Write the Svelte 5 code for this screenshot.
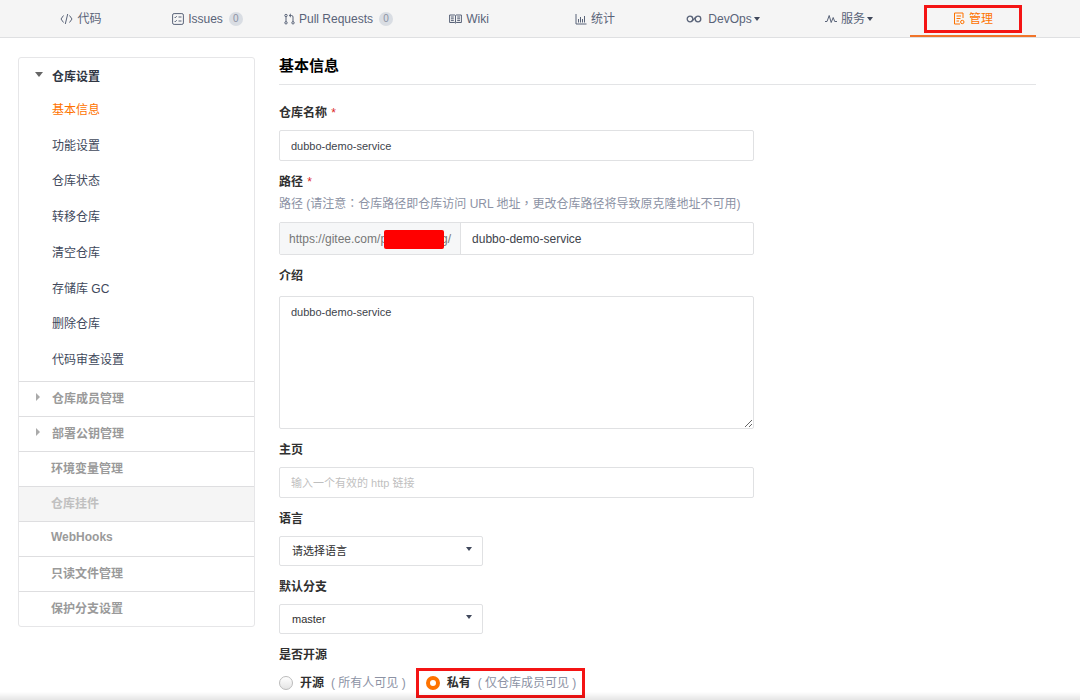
<script>
  const tabs = [
    { id: 'code', label: '代码' },
    { id: 'issues', label: 'Issues', count: 0 },
    { id: 'pulls', label: 'Pull Requests', count: 0 },
    { id: 'wiki', label: 'Wiki' },
    { id: 'stats', label: '统计' },
    { id: 'devops', label: 'DevOps', dropdown: true },
    { id: 'services', label: '服务', dropdown: true },
    { id: 'manage', label: '管理' }
  ];

  const settings = ['基本信息', '功能设置', '仓库状态', '转移仓库', '清空仓库', '存储库 GC', '删除仓库', '代码审查设置'];

  const sections = [
    { label: '仓库成员管理', fold: true },
    { label: '部署公钥管理', fold: true },
    { label: '环境变量管理' },
    { label: '仓库挂件', disabled: true },
    { label: 'WebHooks' },
    { label: '只读文件管理' },
    { label: '保护分支设置' }
  ];

  let activeTab = $state('manage');
  let activeSetting = $state('基本信息');
  let name = $state('dubbo-demo-service');
  let path = $state('dubbo-demo-service');
  let intro = $state('dubbo-demo-service');
  let homepage = $state('');
  let language = $state('');
  let branch = $state('master');
  let visibility = $state('private');
</script>

{#snippet icon(id)}
  {#if id === 'code'}
    <svg class="icon" width="13" height="12" viewBox="0 0 13 12"><path d="M3.5 2.5 1 6l2.5 3.5M9.5 2.5 12 6 9.500 9.500M7.700 1 5.300 11" /></svg>
  {:else if id === 'issues'}
    <svg class="icon" width="12" height="12" viewBox="0 0 12 12"><rect x=".6" y=".6" width="10.800" height="10.800" rx="1.500" /><path d="m2.500 4 .8.8 1.400-1.600M6.500 4h3M2.500 8l.8.8 1.400-1.600M6.500 8h3" /></svg>
  {:else if id === 'pulls'}
    <svg class="icon" width="11" height="12" viewBox="0 0 11 12"><circle cx="2" cy="2.500" r="1.200" /><circle cx="2" cy="9.800" r="1.200" /><circle cx="9" cy="9.800" r="1.200" /><path d="M2 3.700v4.900M9 8.600V4Q9 2.500 7.500 2.500H5.500M7 .8 5.200 2.500 7 4.200" /></svg>
  {:else if id === 'wiki'}
    <svg class="icon" width="13" height="10" viewBox="0 0 13 10"><path d="M.6 1h5.200l.7.600.7-.600h5.200v7.500H7.200l-.7.600-.7-.600H.6zM6.500 1.600v7M2 3h2.800M2 4.800h2.800M2 6.600h2.800M8.200 3H11M8.200 4.800H11M8.200 6.600H11" /></svg>
  {:else if id === 'stats'}
    <svg class="icon" width="12" height="12" viewBox="0 0 12 12"><path d="M1 1v10h10.500M3.500 9.500V6M5.500 9.500V4M7.500 9.500V6M9.500 9.500V3" /></svg>
  {:else if id === 'devops'}
    <svg class="icon bold wide" width="16" height="10" viewBox="0 0 16 10"><circle cx="4" cy="5" r="2.800" /><circle cx="12" cy="5" r="2.800" /><path d="M6 7 10 3" /></svg>
  {:else if id === 'services'}
    <svg class="icon" width="12" height="12" viewBox="0 0 12 12"><path d="M0 8.500h2L4.200 2.500 6.200 9.500 8.200 4.500l1.500 4H12" /></svg>
  {:else}
    <svg class="icon" width="12" height="13" viewBox="0 0 12 13"><path d="M10 6V1H1.500v11H7M3.500 4h4.500M3.500 6.500h4M3.500 9H6" /><circle cx="9.300" cy="10" r="1.700" /></svg>
  {/if}
{/snippet}

<nav class="tabs">
  {#each tabs as tab}
    <a href="#{tab.id}" class="tab" class:active={activeTab === tab.id} onclick={() => (activeTab = tab.id)}>
      <span class="tab-label" class:marked={tab.id === 'manage'}>
        {@render icon(tab.id)}
        {tab.label}
        {#if tab.count !== undefined}<span class="count">{tab.count}</span>{/if}
        {#if tab.dropdown}<span class="caret"></span>{/if}
      </span>
    </a>
  {/each}
</nav>

<div class="page">
  <aside class="sidebar">
    <button class="side-head"><span class="arrow down"></span>仓库设置</button>
    <div class="side-list">
      {#each settings as item}
        <a href="#{item}" class:current={activeSetting === item} onclick={() => (activeSetting = item)}>{item}</a>
      {/each}
    </div>
    {#each sections as s}
      <button class="side-section" class:fold={s.fold} disabled={s.disabled}>
        {#if s.fold}<span class="arrow right"></span>{/if}{s.label}
      </button>
    {/each}
  </aside>

  <main>
    <h1>基本信息</h1>
    <form>
      <div class="field">
        <label for="name">仓库名称 <span class="req">*</span></label>
        <input id="name" class="control" type="text" bind:value={name} />
      </div>

      <div class="field">
        <label class="tight" for="path">路径 <span class="req">*</span></label>
        <p class="help">路径 (请注意<span class="punct">：</span>仓库路径即仓库访问 URL 地址<span class="punct">，</span>更改仓库路径将导致原克隆地址不可用)</p>
        <div class="group">
          <span class="addon">https://gitee.com/p<span class="redacted"></span>g/</span>
          <input id="path" type="text" bind:value={path} />
        </div>
      </div>

      <div class="field">
        <label class="loose" for="intro">介绍</label>
        <textarea id="intro" class="control" bind:value={intro}></textarea>
      </div>

      <div class="field">
        <label for="homepage">主页</label>
        <input id="homepage" class="control" type="text" placeholder="输入一个有效的 http 链接" bind:value={homepage} />
      </div>

      <div class="field">
        <label for="language">语言</label>
        <div class="select">
          <select id="language" bind:value={language}>
            <option value="">请选择语言</option>
            <option value="java">Java</option>
          </select>
          <span class="caret"></span>
        </div>
      </div>

      <div class="field">
        <label for="branch">默认分支</label>
        <div class="select">
          <select id="branch" bind:value={branch}>
            <option value="master">master</option>
          </select>
          <span class="caret"></span>
        </div>
      </div>

      <fieldset>
        <legend>是否开源</legend>
        <div class="radios">
          <label class="radio">
            <input type="radio" name="visibility" value="public" bind:group={visibility} />
            <b>开源</b><span>( 所有人可见 )</span>
          </label>
          <label class="radio marked">
            <input type="radio" name="visibility" value="private" bind:group={visibility} />
            <b>私有</b><span>( 仅仓库成员可见 )</span>
          </label>
        </div>
      </fieldset>
    </form>
  </main>
</div>
<div class="bottom-shade"></div>

<style>
  :global(body) {
    background: #fff;
    color: #40485b;
    font-family: "Liberation Sans", "Noto Sans CJK SC", sans-serif;
    font-size: 12px;
    line-height: 20px;
    overflow: hidden;
  }
  a { color: inherit; text-decoration: none; }
  button, input, select, textarea { font-family: inherit; box-sizing: border-box; margin: 0; }

  .tabs {
    display: grid;
    grid-template-columns: 126fr 127fr 135fr 126fr 126fr 130fr 122fr 126fr;
    padding: 0 44px 0 18px;
    background: #f5f5f5;
    border-bottom: 1px solid #dfe0e2;
  }
  .tab {
    display: flex; justify-content: center; align-items: center;
    height: 37px; box-sizing: border-box;
    padding-top: 2px;
    border-bottom: 2px solid transparent;
    color: #596378;
  }
  .tab.active { color: #fe7300; border-bottom-color: #f0742a; }
  .tab-label { display: flex; align-items: center; gap: 4px; white-space: nowrap; }
  .icon { fill: none; stroke: currentColor; stroke-width: 1; }
  .icon.bold { stroke-width: 1.3; }
  .icon.wide { margin-right: 2px; }
  .count {
    margin-left: 2px; width: 14px; height: 14px; border-radius: 7px;
    background: #d9dde3; color: #8c92a4; font-size: 10px; line-height: 14px; text-align: center;
  }
  .caret {
    border: 3px solid transparent; border-top: 4px solid #40485b; border-bottom: 0;
  }
  .tab .caret { margin-left: -2px; }
  .marked { border: 3px solid #f41414; }
  .tab-label.marked { padding: 1px 26px; }

  .page { display: flex; align-items: flex-start; gap: 24px; padding: 19px 44px 0 18px; }
  .sidebar {
    flex: 0 0 237px; box-sizing: border-box;
    border: 1px solid #e6e6e8; border-radius: 3px;
  }
  .side-head, .side-section {
    position: relative; display: block; width: 100%;
    border: 0; background: none; text-align: left;
    font-size: 12px; font-weight: bold;
  }
  .side-head { height: 34px; padding: 0 0 0 33px; color: #303643; }
  .side-list { display: grid; grid-auto-rows: 1fr; height: 286px; padding-bottom: 3px; }
  .side-list a { display: flex; align-items: center; padding-left: 33px; }
  .side-list a.current { color: #fe7300; }
  .side-section {
    height: 35px; padding: 0 0 4px 32px;
    border-top: 1px solid #dedee0; color: #9a9a9a;
  }
  .side-section.fold { padding-left: 33px; }
  .side-section:disabled { background: #f5f5f5; color: #c0c0c0; }
  .arrow { position: absolute; left: 16px; top: 14px; }
  .arrow.down { border: 4px solid transparent; border-top: 5px solid #666; border-bottom: 0; }
  .arrow.right { left: 17px; top: 11px; border: 4px solid transparent; border-left: 4px solid #aaa; border-right: 0; }

  main { flex: 1; min-width: 0; }
  h1 {
    margin: 0 0 18px; padding-bottom: 9px; border-bottom: 1px solid #e3e4e6;
    color: #000; font-size: 15px; line-height: 18px;
  }
  form { max-width: 475px; }
  .field { margin-bottom: 11px; }
  .field > label, legend {
    display: block; margin-bottom: 7px; padding: 0;
    color: #303030; font-weight: bold;
  }
  .field > .tight { margin-bottom: 2px; }
  .field > .loose { margin-bottom: 10px; }
  .req { margin-left: 1px; color: #db2828; font-weight: normal; }
  .help { margin: 0 0 8px; color: #8c92a4; white-space: nowrap; }
  .punct { font-family: "Noto Sans CJK TC", sans-serif; line-height: 1; }
  .control {
    display: block; width: 100%; height: 31px; padding: 0 11px;
    border: 1px solid #e0e1e3; border-radius: 2px;
    background: #fff; color: #40444c; font-size: 11px;
  }
  .control::placeholder { color: #bfbfbf; }
  textarea.control { height: 133px; padding: 8px 11px; line-height: 14px; resize: vertical; }
  .group { display: flex; height: 33px; box-sizing: border-box; border: 1px solid #e0e1e3; border-radius: 2px; }
  .addon {
    display: flex; align-items: center; padding: 0 9px;
    border-right: 1px solid #e0e1e3; background: #f6f7f8; color: #777;
  }
  .redacted { width: 60px; height: 19px; margin: 2px -3px 0; border-radius: 2px; background: #f00; z-index: 1; }
  .group input { flex: 1; min-width: 0; border: 0; padding: 0 11px; background: none; color: #40444c; font-size: 12px; }

  .select { position: relative; width: 204px; }
  .select select {
    display: block; width: 100%; height: 30px; padding: 0 12px; appearance: none;
    border: 1px solid #e0e1e3; border-radius: 2px; background: #fff; color: #303030; font-size: 11px;
  }
  .select .caret { position: absolute; right: 11px; top: 11px; pointer-events: none; }

  fieldset { margin: 0; padding: 0; border: 0; }
  legend { margin-bottom: 3px; }
  .radios { display: flex; align-items: center; gap: 10px; }
  .radio { display: flex; align-items: center; gap: 7px; color: #8c92a4; white-space: nowrap; }
  .radio b { color: #303030; }
  .radio.marked { padding: 2px 6px 2px 7px; }
  .radio input {
    appearance: none; width: 14px; height: 14px;
    border: 1px solid #bbb; border-radius: 50%; background: linear-gradient(#fff, #e4e4e4);
  }
  .radio input:checked { border: 4px solid #fe7300; background: #fff; }

  .bottom-shade {
    position: fixed; left: 0; right: 0; bottom: 0; height: 8px;
    background: linear-gradient(rgba(0, 0, 0, 0), rgba(0, 0, 0, 0.1)); pointer-events: none;
  }
</style>
